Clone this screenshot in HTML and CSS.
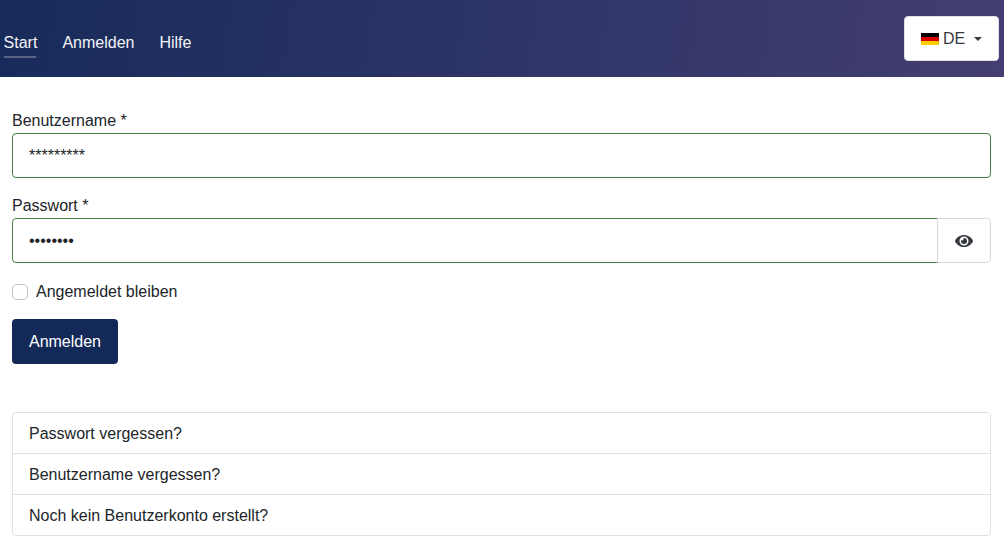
FILE: index.html
```html
<!DOCTYPE html>
<html lang="de">
<head>
    <meta charset="UTF-8">
    <meta name="viewport" content="width=device-width, initial-scale=1.0">
    <title>Anmelden</title>
    <link rel="stylesheet" href="styles.css">
</head>
<body>
    <div class="navbar">
        <div class="nav-links">
            <a class="nav-link active" href="#">Start</a>
            <a class="nav-link" href="#">Anmelden</a>
            <a class="nav-link" href="#">Hilfe</a>
        </div>
        <button class="lang-btn" type="button">
            <svg class="flag" viewBox="0 0 18 12" width="18" height="12" aria-hidden="true">
                <rect width="18" height="4" y="0" fill="#000"/>
                <rect width="18" height="4" y="4" fill="#d00"/>
                <rect width="18" height="4" y="8" fill="#ffce00"/>
            </svg>
            <span>DE</span>
            <span class="caret"></span>
        </button>
    </div>

    <div class="container">
        <form class="login-form">
            <div class="field">
                <label for="username">Benutzername *</label>
                <input class="input valid" id="username" type="text" value="*********">
            </div>
            <div class="field">
                <label for="password">Passwort *</label>
                <div class="input-group">
                    <input class="input valid" id="password" type="password" value="12345678">
                    <button class="eye-btn" type="button" aria-label="Passwort anzeigen">
                        <svg viewBox="0 0 576 512" width="18" height="16" aria-hidden="true">
                            <path fill="#343a40" d="M572.52 241.4C518.29 135.59 410.93 64 288 64S57.68 135.64 3.48 241.41a32.35 32.35 0 0 0 0 29.19C57.71 376.41 165.07 448 288 448s230.32-71.64 284.52-177.41a32.35 32.35 0 0 0 0-29.19zM288 400a144 144 0 1 1 144-144 143.93 143.93 0 0 1-144 144zm0-240a95.31 95.31 0 0 0-25.31 3.79 47.85 47.85 0 0 1-66.9 66.9A95.78 95.78 0 1 0 288 160z"/>
                        </svg>
                    </button>
                </div>
            </div>
            <label class="check-row">
                <input class="check" type="checkbox">
                <span>Angemeldet bleiben</span>
            </label>
            <button class="submit-btn" type="button">Anmelden</button>
        </form>

        <div class="link-list">
            <a class="link-item" href="#">Passwort vergessen?</a>
            <a class="link-item" href="#">Benutzername vergessen?</a>
            <a class="link-item" href="#">Noch kein Benutzerkonto erstellt?</a>
        </div>
    </div>
</body>
</html>
```

FILE: styles.css
```css
* {
    box-sizing: border-box;
}
body {
    font-family: "Liberation Sans", Arial, sans-serif;
    font-size: 16px;
    line-height: 24px;
    color: #212529;
    background-color: #fff;
    margin: 0;
    padding: 0;
}
.navbar {
    height: 77px;
    padding: 16px 5px 16px 3.6px;
    display: flex;
    justify-content: space-between;
    background: linear-gradient(100deg, #172b5a 0%, #443e72 100%);
}
.nav-links {
    display: flex;
    gap: 25px;
    padding-top: 15px;
}
.nav-link {
    color: #f4f4f8;
    text-decoration: none;
    height: 27px;
}
.nav-link.active {
    position: relative;
}
.nav-link.active::after {
    content: "";
    position: absolute;
    left: 0;
    right: 1.6px;
    bottom: 0;
    height: 2px;
    background: #5b6486;
}
.lang-btn {
    width: 95px;
    height: 45px;
    padding: 0 0 0 16px;
    display: flex;
    align-items: center;
    background: #fff;
    border: 1px solid #dee2e6;
    border-radius: 4px;
    color: #343a40;
    font: inherit;
}
.flag {
    margin-right: 4px;
}
.caret {
    margin-left: 9px;
    border-top: 4.8px solid #343a40;
    border-left: 4.8px solid transparent;
    border-right: 4.8px solid transparent;
}
.container {
    padding: 32px 13px 0 12px;
}
.field {
    margin-bottom: 16px;
}
.field label {
    display: block;
}
.input {
    display: block;
    width: 100%;
    height: 45px;
    padding: 0 16px;
    border: 1px solid #ced4da;
    border-radius: 4px;
    color: #212529;
    font: inherit;
    outline: none;
}
.input.valid {
    border-color: #458340;
}
.input-group {
    display: flex;
}
.input-group .input {
    flex: 1;
    border-radius: 4px 0 0 4px;
}
.eye-btn {
    width: 54px;
    height: 45px;
    margin-left: -1px;
    padding: 0;
    display: flex;
    align-items: center;
    justify-content: center;
    background: #fff;
    border: 1px solid #d5d8dc;
    border-radius: 0 4px 4px 0;
}
.check-row {
    display: flex;
    align-items: center;
    gap: 8px;
    margin-top: 17px;
    height: 24px;
}
.check {
    width: 16px;
    height: 16px;
    margin: 0;
    appearance: none;
    background: #fff;
    border: 1px solid #c4c8cc;
    border-radius: 4px;
}
.submit-btn {
    display: block;
    width: 106px;
    height: 45px;
    margin-top: 15px;
    padding: 0;
    background-color: #132a58;
    border: none;
    border-radius: 4px;
    color: #fff;
    font: inherit;
}
.link-list {
    display: flex;
    flex-direction: column;
    margin-top: 48px;
    border: 1px solid #dee2e6;
    border-radius: 4px;
}
.link-item {
    height: 41px;
    padding: 9px 16px 0;
    color: #212529;
    text-decoration: none;
    border-bottom: 1px solid #dee2e6;
}
.link-item:last-child {
    height: 40px;
    border-bottom: none;
}
```
